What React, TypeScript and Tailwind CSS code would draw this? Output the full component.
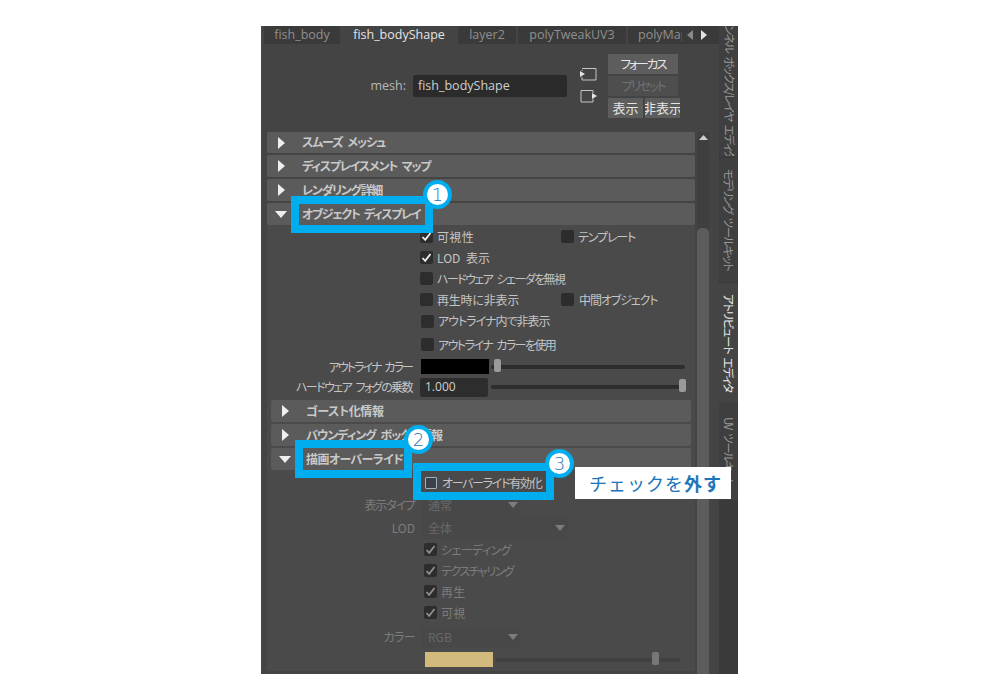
const jp = "font-['Noto_Sans_CJK_JP','Inter',sans-serif] [font-feature-settings:'palt'] [word-spacing:3px]";

function Check({ checked = false, dim = false, ml = "ml-[153px]" }: { checked?: boolean; dim?: boolean; ml?: string }) {
  return (
    <span className={`${ml} flex h-[13px] w-[13px] shrink-0 items-center justify-center rounded-[2px] bg-[#2d2d2d]`}>
      {checked && (
        <svg width="11" height="11" viewBox="0 0 11 11">
          <path d="M1.5 6 L4.2 8.8 L9.5 2" fill="none" stroke={dim ? "#8f8f8f" : "#eeeeee"} strokeWidth="1.8" />
        </svg>
      )}
    </span>
  );
}

function Tri({ open = false }: { open?: boolean }) {
  return open ? (
    <svg width="12" height="7" viewBox="0 0 12 7" className="shrink-0">
      <path d="M0 0 H12 L6 7 Z" fill="#efefef" />
    </svg>
  ) : (
    <svg width="7" height="12" viewBox="0 0 7 12" className="shrink-0">
      <path d="M0 0 L7 6 L0 12 Z" fill="#efefef" />
    </svg>
  );
}

function Section({ label, tr, open = false, inner = false, h = "h-[22px]" }: { label: string; tr: string; open?: boolean; inner?: boolean; h?: string }) {
  return (
    <div className={`mb-[2px] flex items-center rounded-[2px] bg-[#5b5b5b] ${h} ${inner ? "mx-[4px]" : ""}`}>
      <span className="flex w-[35px] shrink-0 justify-center pr-[7px]">
        <Tri open={open} />
      </span>
      <span className={`text-[12px] font-bold whitespace-nowrap text-[#c9c9c9] ${inner ? "" : "pb-[1px]"} ${tr} ${jp}`}>{label}</span>
    </div>
  );
}

function Row({ h, children }: { h: string; children: React.ReactNode }) {
  return <div className={`flex items-center ${h}`}>{children}</div>;
}

function Text({ children, dim = false, tr = "tracking-[-1.1px]", className = "" }: { children: React.ReactNode; dim?: boolean; tr?: string; className?: string }) {
  return (
    <span className={`text-[12px] whitespace-nowrap ${tr} ${dim ? "text-[#7c7c7c]" : "text-[#c4c4c4]"} ${jp} ${className}`}>
      {children}
    </span>
  );
}

function Slider({ thumb, track }: { thumb: string; track: string }) {
  return (
    <div className={`relative h-[4px] rounded-full ${track}`}>
      <span className={`absolute top-[-6px] h-[13px] w-[7px] rounded-[2px] ${thumb}`} />
    </div>
  );
}

function Dropdown({ label, value, width, tr }: { label: string; value: string; width: string; tr?: string }) {
  return (
    <div className="flex h-[23px] items-center">
      <span className="flex w-[148px] justify-end">
        <Text dim tr={tr}>{label}</Text>
      </span>
      <span className={`ml-[7px] flex h-[22px] items-center justify-between bg-[#484848] pr-[3px] pl-[6px] ${width}`}>
        <span className={`text-[12px] text-[#686868] ${jp}`}>{value}</span>
        <svg width="10" height="6" viewBox="0 0 10 6">
          <path d="M0 0 H10 L5 6 Z" fill="#7c7c7c" />
        </svg>
      </span>
    </div>
  );
}

function ToolButton({ children, dim = false, w = "w-[70px]", text = "text-[12.5px] tracking-[-2px]" }: { children: React.ReactNode; dim?: boolean; w?: string; text?: string }) {
  return (
    <span
      className={`flex h-[20px] ${w} items-center justify-center overflow-hidden whitespace-nowrap ${text} ${jp} ${
        dim ? "bg-[#4e4e4e] text-[#717171]" : "bg-[#5d5d5d] text-[#e6e6e6]"
      }`}
    >
      {children}
    </span>
  );
}

function Tab({ label, active = false, w }: { label: string; active?: boolean; w: string }) {
  return (
    <span
      className={`flex h-[18px] shrink-0 items-center justify-center rounded-t-[3px] font-['Open_Sans',sans-serif] text-[12.5px] whitespace-nowrap ${w} ${
        active ? "bg-[#444444] text-[#e4e4e4]" : "bg-[#3a3a3a] text-[#8f8f8f]"
      }`}
    >
      {label}
    </span>
  );
}

function SideTab({ label, h, active = false, align = "justify-center" }: { label: string; h: string; active?: boolean; align?: string }) {
  return (
    <div
      className={`flex w-[19px] shrink-0 overflow-hidden ${h} ${align} items-center ${active ? "bg-[#444444] text-[#ececec]" : "rounded-[3px] bg-[#3f3f3f] text-[#989898]"}`}
    >
      <span className={`text-[11.5px] tracking-[-1.45px] whitespace-nowrap [text-orientation:sideways] [writing-mode:vertical-rl] ${jp}`}>{label}</span>
    </div>
  );
}

function Marker({ n, className }: { n: number; className: string }) {
  return (
    <span
      className={`absolute flex h-[29px] w-[29px] items-center justify-center rounded-full border-[4px] border-[#00aeef] bg-white font-['DejaVu_Sans',sans-serif] text-[18px] font-extralight text-[#1b75bb] ${className}`}
    >
      {n}
    </span>
  );
}

export default function App() {
  return (
    <div className="relative h-[700px] w-[1000px] overflow-hidden bg-white pt-[26px] pl-[261px]">
      <div className="flex h-[648px] w-[477px] overflow-hidden bg-[#444444]">
        <div className="flex w-[458px] shrink-0 flex-col">
          {/* node tabs */}
          <div className="flex h-[18px] items-end">
            <div className="flex w-[421px] shrink-0 gap-[2px] overflow-hidden pl-[3px]">
              <Tab label="fish_body" w="w-[76px]" />
              <Tab label="fish_bodyShape" active w="w-[114px]" />
              <Tab label="layer2" w="w-[58px]" />
              <Tab label="polyTweakUV3" w="w-[108px]" />
              <span className="flex h-[18px] w-[60px] shrink-0 items-center overflow-hidden rounded-t-[3px] bg-[#3a3a3a] pl-[10px] font-['Open_Sans',sans-serif] text-[12.5px] text-[#8f8f8f]">
                polyMap
              </span>
            </div>
            <div className="flex h-[18px] flex-1 items-center gap-[8px] bg-[#3a3a3a] pl-[5px]">
              <svg width="6" height="10" viewBox="0 0 6 10"><path d="M6 0 L0 5 L6 10 Z" fill="#8a8a8a" /></svg>
              <svg width="6" height="10" viewBox="0 0 6 10"><path d="M0 0 L6 5 L0 10 Z" fill="#e2e2e2" /></svg>
            </div>
          </div>

          {/* mesh toolbar */}
          <div className="flex h-[88px] shrink-0 items-start">
            <span className="mt-[31px] flex h-[22px] w-[145px] items-center justify-end pt-[1px] font-['Open_Sans',sans-serif] text-[12.5px] text-[#b8b8b8]">mesh:</span>
            <span className="mt-[31px] ml-[7px] flex h-[22px] w-[154px] items-center rounded-[2px] bg-[#2b2b2b] pt-[1px] pl-[5px] font-['Open_Sans',sans-serif] text-[12.5px] text-[#d0d0d0]">
              fish_bodyShape
            </span>
            <div className="mt-[23px] ml-[13px] flex w-[17px] flex-col gap-[8px]">
              <svg width="17" height="14" viewBox="0 0 17 14">
                <path d="M2 1.5 H16 V13 H2 V10" fill="none" stroke="#c4c4c4" />
                <path d="M2 3 V4" stroke="#c4c4c4" />
                <path d="M0 4 L5 7 L0 10 Z" fill="#e4e4e4" />
              </svg>
              <svg width="17" height="14" viewBox="0 0 17 14">
                <path d="M13 1.5 H1 V13 H13 V10 M13 1.5 V4" fill="none" stroke="#c4c4c4" />
                <path d="M12 4 L17 7 L12 10 Z" fill="#e4e4e4" />
              </svg>
            </div>
            <div className="mt-[10px] ml-[11px] flex w-[72px] flex-col gap-[2px]">
              <ToolButton>フォーカス</ToolButton>
              <ToolButton dim>プリセット</ToolButton>
              <div className="flex gap-[2px]">
                <ToolButton w="w-[35px]" text="text-[13px]">表示</ToolButton>
                <ToolButton w="w-[35px]" text="text-[13px]">非表示</ToolButton>
              </div>
            </div>
          </div>

          {/* attribute panel */}
          <div className="flex min-h-0 flex-1">
            <div className="w-[436px] shrink-0 overflow-hidden pr-[2px] pl-[6px]">
              <Section label="スムーズ メッシュ" tr="tracking-[-1.05px]" h="h-[21px]" />
              <Section label="ディスプレイスメント マップ" tr="tracking-[-1.2px]" />
              <Section label="レンダリング詳細" tr="tracking-[-1.3px]" />
              <Section label="オブジェクト ディスプレイ" tr="tracking-[-1.35px]" open />

              <div className="-mt-[2px] bg-[#4a4a4a] pt-[1px]">
                <Row h="h-[21px]">
                  <Check checked />
                  <Text tr="tracking-[0.35px]" className="ml-[4px] w-[124px]">可視性</Text>
                  <Check ml="" />
                  <Text className="ml-[4px]">テンプレート</Text>
                </Row>
                <Row h="h-[21px]">
                  <Check checked />
                  <Text tr="tracking-[0px]" className="ml-[4px]">LOD 表示</Text>
                </Row>
                <Row h="h-[21px]">
                  <Check />
                  <Text tr="tracking-[-1.55px]" className="ml-[4px]">ハードウェア シェーダを無視</Text>
                </Row>
                <Row h="h-[21px]">
                  <Check />
                  <Text tr="tracking-[-0.2px]" className="ml-[4px] w-[124px]">再生時に非表示</Text>
                  <Check ml="" />
                  <Text className="ml-[5px]">中間オブジェクト</Text>
                </Row>
                <Row h="h-[22px]">
                  <Check ml="ml-[154px]" />
                  <Text tr="tracking-[-1px]" className="ml-[4px]">アウトライナ内で非表示</Text>
                </Row>
                <Row h="h-[25px]">
                  <Check ml="ml-[154px]" />
                  <Text tr="tracking-[-1.55px]" className="ml-[4px]">アウトライナ カラーを使用</Text>
                </Row>
                <Row h="h-[19px]">
                  <span className="flex w-[145px] justify-end">
                    <Text tr="tracking-[-1.9px]">アウトライナ カラー</Text>
                  </span>
                  <span className="ml-[9px] h-[15px] w-[68px] bg-black" />
                  <span className="ml-[2px] w-[194px]">
                    <Slider track="bg-[#2d2d2d]" thumb="left-[3px] bg-[#9a9a9a]" />
                  </span>
                </Row>
                <Row h="h-[22px]">
                  <span className="flex w-[145px] justify-end">
                    <Text tr="tracking-[-1.55px]">ハードウェア フォグの乗数</Text>
                  </span>
                  <span className="ml-[8px] flex h-[19px] w-[68px] items-center rounded-[2px] bg-[#2d2d2d] pl-[5px] font-['Open_Sans',sans-serif] text-[12px] text-[#cfcfcf]">
                    1.000
                  </span>
                  <span className="ml-[3px] w-[194px]">
                    <Slider track="bg-[#2d2d2d]" thumb="right-[-1px] bg-[#9a9a9a]" />
                  </span>
                </Row>

                <div className="mt-[2px]">
                  <Section inner label="ゴースト化情報" tr="tracking-[-0.4px]" />
                  <Section inner label="バウンディング ボックス情報" tr="tracking-[-1px]" />
                  <Section inner open label="描画オーバーライド" tr="tracking-[-0.6px]" />
                </div>

                <Row h="h-[21px]">
                  <span className="ml-[158px] flex h-[12px] w-[12px] items-center justify-center rounded-[1px] border border-[#9fb0c0] bg-[#3a4148]" />
                  <Text tr="tracking-[-1.3px]" className="ml-[5px]">オーバーライド有効化</Text>
                </Row>
                <Dropdown label="表示タイプ" value="通常" width="w-[99px]" />
                <Dropdown label="LOD" value="全体" width="w-[146px]" tr="tracking-[0px]" />
                <Row h="h-[21px]">
                  <Check checked dim ml="ml-[157px]" />
                  <Text dim tr="tracking-[-0.6px]" className="ml-[4px]">シェーディング</Text>
                </Row>
                <Row h="h-[21px]">
                  <Check checked dim ml="ml-[157px]" />
                  <Text dim tr="tracking-[-1.5px]" className="ml-[4px]">テクスチャリング</Text>
                </Row>
                <Row h="h-[21px]">
                  <Check checked dim ml="ml-[157px]" />
                  <Text dim tr="tracking-[0.35px]" className="ml-[4px]">再生</Text>
                </Row>
                <Row h="h-[21px]">
                  <Check checked dim ml="ml-[157px]" />
                  <Text dim tr="tracking-[0.35px]" className="ml-[4px]">可視</Text>
                </Row>
                <div className="h-[2px]" />
                <Dropdown label="カラー" value="RGB" width="w-[99px]" tr="tracking-[-0.6px]" />
                <Row h="h-[23px]">
                  <span className="ml-[158px] h-[15px] w-[68px] bg-[#d2b97c]" />
                  <span className="ml-[3px] w-[184px]">
                    <Slider track="bg-[#414141]" thumb="left-[156px] bg-[#777777]" />
                  </span>
                </Row>
              </div>
            </div>

            {/* scrollbar */}
            <div className="flex w-[12px] shrink-0 flex-col items-center bg-[#3f3f3f]">
              <svg width="9" height="5" viewBox="0 0 9 5" className="mt-[3px]"><path d="M4.5 0 L9 5 H0 Z" fill="#cfcfcf" /></svg>
              <div className="mt-[88px] w-full flex-1 rounded-t-[5px] bg-[#5c5c5c]" />
            </div>
          </div>
        </div>

        {/* vertical tool tabs */}
        <div className="flex flex-1 flex-col bg-[#3a3a3a]">
          <SideTab label="チャンネル ボックス/レイヤ エディタ" h="h-[130px] mb-[2px]" align="justify-end pb-[15px]" />
          <SideTab label="モデリング ツールキット" h="h-[124px] mb-[1px]" />
          <SideTab label="アトリビュート エディタ" h="h-[120px]" active />
          <SideTab label="UV ツールキット" h="h-[97px]" />
        </div>
      </div>

      {/* annotations */}
      <span className="absolute top-[196px] left-[291px] h-[37px] w-[142px] border-[8px] border-[#00aeef]" />
      <Marker n={1} className="top-[180px] left-[423px]" />
      <span className="absolute top-[440px] left-[295px] h-[38px] w-[117px] border-[8px] border-[#00aeef]" />
      <Marker n={2} className="top-[425px] left-[404px]" />
      <span className="absolute top-[463px] left-[413px] h-[37px] w-[141px] border-[8px] border-[#00aeef]" />
      <Marker n={3} className="top-[449px] left-[545px]" />
      <span className="absolute top-[467px] left-[575px] flex h-[32px] w-[156px] items-center bg-white pl-[14px] font-['Noto_Sans_CJK_JP',sans-serif] text-[18px] tracking-[1px] text-[#1b75bb]">
        チェックを<b className="font-bold">外す</b>
      </span>
    </div>
  );
}
